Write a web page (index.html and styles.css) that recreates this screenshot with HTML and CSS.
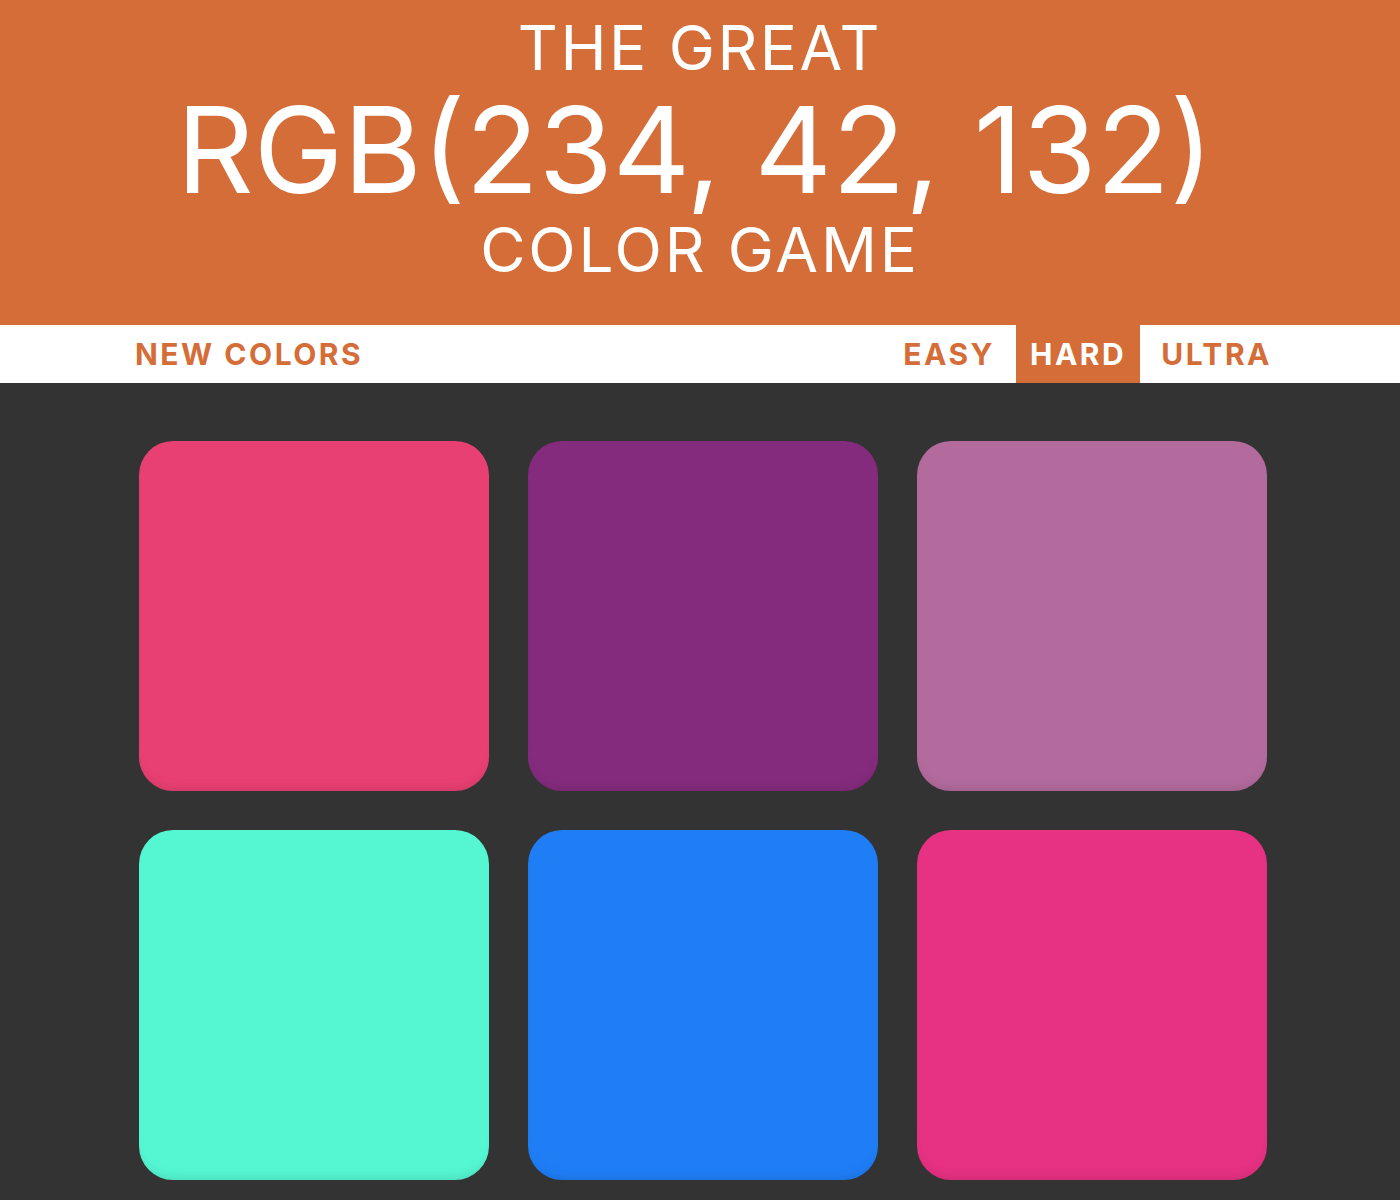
FILE: index.html
```html
<!DOCTYPE html>
<html lang="en">
<head>
<meta charset="utf-8">
<title>The Great RGB Color Game</title>
<link rel="stylesheet" href="styles.css">
</head>
<body>
<header class="header">
  <h1 class="title">
    <span class="title-top">THE GREAT</span>
    <span class="title-rgb">RGB(234, 42, 132)</span>
    <span class="title-bottom">COLOR GAME</span>
  </h1>
</header>
<nav class="stripe">
  <div class="stripe-inner">
    <button class="btn">NEW COLORS</button>
    <span class="message"></span>
    <div class="modes">
      <button class="btn">EASY</button>
      <button class="btn selected">HARD</button>
      <button class="btn">ULTRA</button>
    </div>
  </div>
</nav>
<main class="board">
  <div class="square sq1"></div>
  <div class="square sq2"></div>
  <div class="square sq3"></div>
  <div class="square sq4"></div>
  <div class="square sq5"></div>
  <div class="square sq6"></div>
</main>
</body>
</html>
```
FILE: styles.css
```css
html, body {
  margin: 0;
  padding: 0;
}
body {
  background: #333333;
  font-family: "Inter", "Liberation Sans", sans-serif;
  height: 1200px;
  overflow: hidden;
}
.header {
  background: #d46d37;
  height: 325px;
  color: #ffffff;
  text-align: center;
}
.title {
  margin: 0;
  font-weight: 400;
  display: flex;
  flex-direction: column;
  align-items: center;
}
.title-top {
  font-size: 62px;
  line-height: 1;
  letter-spacing: 2.5px;
  padding-top: 17px;
}
.title-rgb {
  font-size: 120px;
  line-height: 1;
  margin-top: 11px;
  margin-right: 10px;
}
.title-bottom {
  font-size: 62px;
  line-height: 1;
  letter-spacing: 2.8px;
  margin-top: 9px;
}
.stripe {
  background: #ffffff;
  height: 58px;
}
.stripe-inner {
  margin-left: 121px;
  width: 1165px;
  height: 100%;
  display: flex;
  align-items: stretch;
}
.message {
  flex: 1;
}
.modes {
  display: flex;
  gap: 7px;
}
.btn {
  border: none;
  background: #ffffff;
  color: #d46d37;
  font-family: "Inter", "Liberation Sans", sans-serif;
  font-weight: 700;
  font-size: 30px;
  letter-spacing: 2.5px;
  padding: 0 14px;
  height: 100%;
  cursor: pointer;
}
.btn.selected {
  background: #d46d37;
  color: #ffffff;
}
.board {
  margin: 58px 0 0 139px;
  width: 1128px;
  display: grid;
  grid-template-columns: repeat(3, 350px);
  grid-auto-rows: 350px;
  column-gap: 39px;
  row-gap: 39px;
}
.square {
  border-radius: 34px;
  box-shadow: inset 0 -10px 12px -8px rgba(0, 0, 0, 0.12);
}
.sq1 { background: #e94073; }
.sq2 { background: #852b7e; }
.sq3 { background: #b36b9e; }
.sq4 { background: #55f7d3; }
.sq5 { background: #1f7ef6; }
.sq6 { background: #e73183; }
```
